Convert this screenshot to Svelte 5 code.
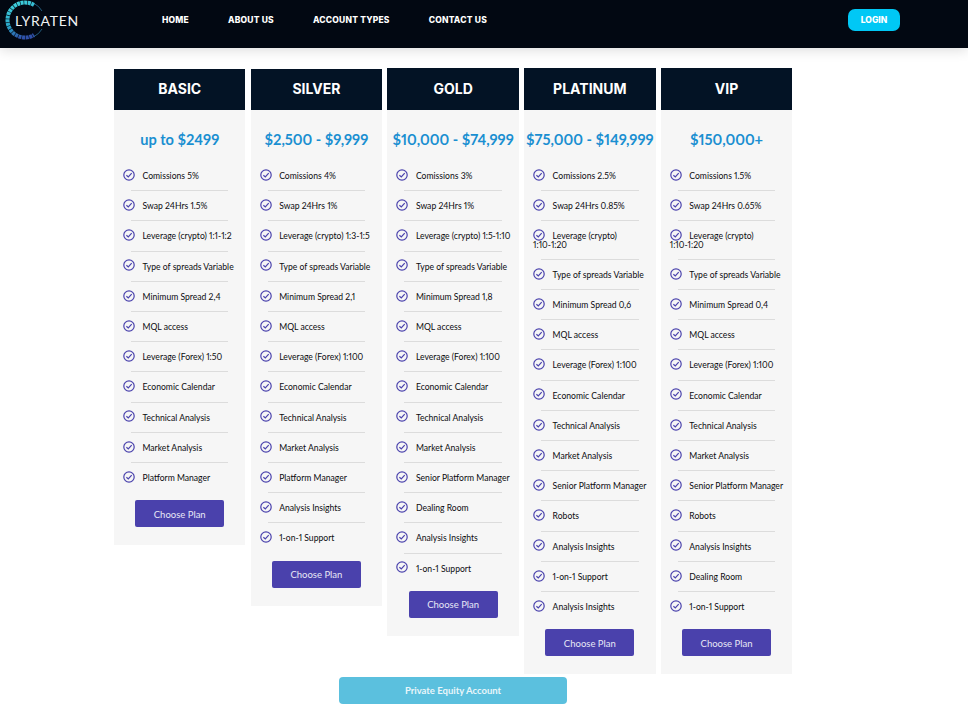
<script>
  // word joiners stop the ratio ranges from breaking at the hyphen
  const wideLeverage = 'Leverage (crypto) 1:10\u2060-\u20601:20';
  const plans = [
    {
      name: 'BASIC',
      price: 'up to $2499',
      features: ['Comissions 5%', 'Swap 24Hrs 1.5%', 'Leverage (crypto) 1:1-1:2', 'Type of spreads Variable', 'Minimum Spread 2,4', 'MQL access', 'Leverage (Forex) 1:50', 'Economic Calendar', 'Technical Analysis', 'Market Analysis', 'Platform Manager']
    },
    {
      name: 'SILVER',
      price: '$2,500 - $9,999',
      features: ['Comissions 4%', 'Swap 24Hrs 1%', 'Leverage (crypto) 1:3-1:5', 'Type of spreads Variable', 'Minimum Spread 2,1', 'MQL access', 'Leverage (Forex) 1:100', 'Economic Calendar', 'Technical Analysis', 'Market Analysis', 'Platform Manager', 'Analysis Insights', '1-on-1 Support']
    },
    {
      name: 'GOLD',
      price: '$10,000 - $74,999',
      raised: true,
      features: ['Comissions 3%', 'Swap 24Hrs 1%', 'Leverage (crypto) 1:5-1:10', 'Type of spreads Variable', 'Minimum Spread 1,8', 'MQL access', 'Leverage (Forex) 1:100', 'Economic Calendar', 'Technical Analysis', 'Market Analysis', 'Senior Platform Manager', 'Dealing Room', 'Analysis Insights', '1-on-1 Support']
    },
    {
      name: 'PLATINUM',
      price: '$75,000 - $149,999',
      raised: true,
      features: ['Comissions 2.5%', 'Swap 24Hrs 0.85%', wideLeverage, 'Type of spreads Variable', 'Minimum Spread 0,6', 'MQL access', 'Leverage (Forex) 1:100', 'Economic Calendar', 'Technical Analysis', 'Market Analysis', 'Senior Platform Manager', 'Robots', 'Analysis Insights', '1-on-1 Support', 'Analysis Insights']
    },
    {
      name: 'VIP',
      price: '$150,000+',
      raised: true,
      features: ['Comissions 1.5%', 'Swap 24Hrs 0.65%', wideLeverage, 'Type of spreads Variable', 'Minimum Spread 0,4', 'MQL access', 'Leverage (Forex) 1:100', 'Economic Calendar', 'Technical Analysis', 'Market Analysis', 'Senior Platform Manager', 'Robots', 'Analysis Insights', 'Dealing Room', '1-on-1 Support']
    }
  ];
  const links = ['HOME', 'ABOUT US', 'ACCOUNT TYPES', 'CONTACT US'];
</script>

<header class="topbar">
  <a class="logo" href="#top">
    <svg class="logo-ring" width="40" height="40" viewBox="0 0 40 40" aria-hidden="true">
      <defs>
        <linearGradient id="ringFill" x1="0.3" y1="0" x2="0.6" y2="1">
          <stop offset="0" stop-color="#3fd0dc" />
          <stop offset="0.55" stop-color="#2aa5c8" />
          <stop offset="1" stop-color="#2f4fa8" />
        </linearGradient>
      </defs>
      <path d="M29 5A17.5 17.5 0 1 0 29 35" fill="none" stroke="url(#ringFill)" stroke-width="4" stroke-dasharray="3 0.6" />
      <path d="M29 3.5A18 18 0 0 1 37 11M37 29A18 18 0 0 1 29 36.5" fill="none" stroke="#2a6f94" stroke-width="0.8" />
    </svg>
    <span class="logo-text">LYRATEN</span>
  </a>
  <nav class="links">
    {#each links as link}
      <a href="#top">{link}</a>
    {/each}
  </nav>
  <button class="login" type="button">LOGIN</button>
</header>

<main class="pricing">
  <div class="plans">
    {#each plans as plan}
      <section class="plan" class:raised={plan.raised}>
        <h2 class="plan-name">{plan.name}</h2>
        <div class="plan-price">{plan.price}</div>
        <ul class="features">
          {#each plan.features as feature}
            <li>
              <svg class="check" width="12" height="12" viewBox="0 0 12 12" aria-hidden="true">
                <circle cx="6" cy="6" r="5.2" fill="none" stroke="#4b43ad" stroke-width="1.2" />
                <path d="M3.4 6.2 5.3 8 8.7 4.2" fill="none" stroke="#4b43ad" stroke-width="1.2" />
              </svg>{feature}
            </li>
          {/each}
        </ul>
        <button class="choose" type="button">Choose Plan</button>
      </section>
    {/each}
  </div>
  <button class="equity" type="button">Private Equity Account</button>
</main>

<style>
  :global(body) {
    margin: 0;
    background: #fff;
  }

  .topbar {
    display: flex;
    align-items: center;
    height: 48px;
    background: #020812;
    box-shadow: 0 2px 12px rgba(0, 0, 0, 0.14);
    box-sizing: border-box;
    padding: 0 68px 8px 5px;
    position: relative;
  }

  .logo {
    display: flex;
    align-items: center;
    width: 157px;
    text-decoration: none;
  }

  .logo-ring {
    flex: none;
  }

  .logo-text {
    margin-left: -30px;
    color: #f1f3f5;
    font-family: Lato, sans-serif;
    font-size: 14px;
    letter-spacing: 0.7px;
  }

  .links {
    display: flex;
    gap: 39px;
    flex: 1;
  }

  .links a {
    color: #fff;
    font-family: Inter, sans-serif;
    font-size: 8.5px;
    font-weight: 800;
    letter-spacing: 0.2px;
    text-decoration: none;
  }

  .login {
    width: 52px;
    height: 22px;
    border: none;
    border-radius: 7px;
    background: #00c8f5;
    color: #fff;
    font-family: Inter, sans-serif;
    font-size: 8.5px;
    font-weight: 800;
  }

  .pricing {
    padding: 20px 176px 10px 114px;
    display: flex;
    flex-direction: column;
    align-items: center;
  }

  .plans {
    align-self: flex-start;
    display: grid;
    grid-template-columns: repeat(5, 131.45px);
    column-gap: 5.27px;
    align-items: start;
  }

  .plan {
    background: #f6f6f6;
    margin-top: 1px;
    padding-bottom: 18px;
    display: flex;
    flex-direction: column;
    align-items: center;
  }

  .plan.raised {
    margin-top: 0;
  }

  .plan-name {
    align-self: stretch;
    height: 41px;
    margin: 0;
    background: #031325;
    color: #fff;
    font-family: Inter, sans-serif;
    font-size: 14px;
    font-weight: 700;
    line-height: 39px;
    text-align: center;
  }

  .plan.raised .plan-name {
    height: 42px;
    line-height: 41px;
  }

  .plan-price {
    margin-top: 21px;
    color: #1a8fd1;
    font-family: Lato, sans-serif;
    font-size: 14.6px;
    font-weight: 700;
    font-variant-numeric: proportional-nums;
    line-height: 18px;
    text-align: center;
    white-space: nowrap;
  }

  .features {
    align-self: stretch;
    list-style: none;
    margin: 23px 0 0;
    padding: 0;
    color: #0b0b0f;
    font-family: Lato, sans-serif;
    font-size: 8.6px;
    font-variant-numeric: proportional-nums;
    line-height: 8.2px;
  }

  .features li {
    padding: 0 8px 0 9px;
  }

  .features li::after {
    content: '';
    display: block;
    height: 1px;
    margin: 10px 9px 11px 8px;
    background: #dcdcdc;
  }

  .features li:last-child::after {
    visibility: hidden;
  }

  .check {
    vertical-align: middle;
    margin: -4px 7.5px -2px 0;
    position: relative;
    top: -1px;
  }

  .choose {
    width: 89px;
    height: 27px;
    margin-top: -4px;
    border: none;
    border-radius: 2px;
    background: #4a41ac;
    color: #e8e8f6;
    font-family: Lato, sans-serif;
    font-size: 9.5px;
    padding-top: 2px;
  }

  .equity {
    width: 228px;
    height: 27px;
    margin-top: 3px;
    border: none;
    border-radius: 4px;
    background: #5bc0de;
    color: #e9f6fa;
    font-family: Lato, sans-serif;
    font-size: 9.5px;
    font-weight: 700;
  }
</style>
